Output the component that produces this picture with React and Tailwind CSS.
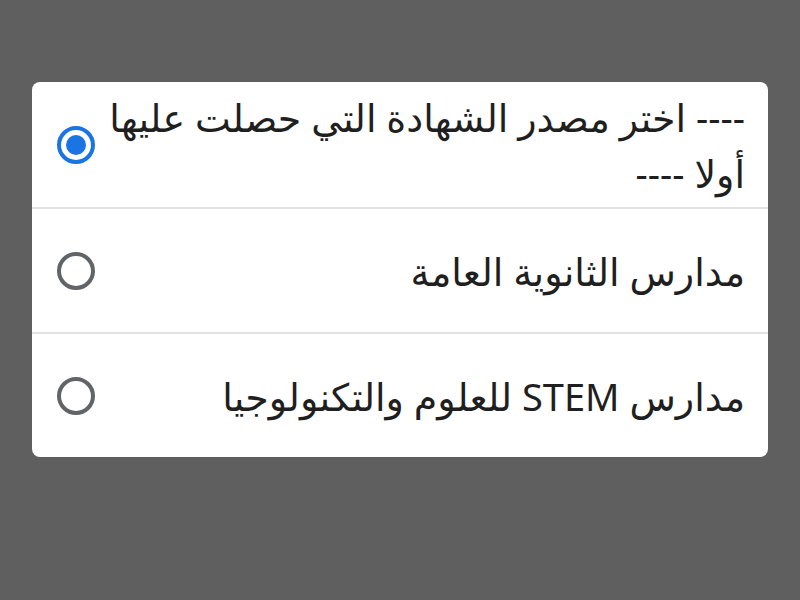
export default function App() {
  const options = [
    { label: "---- اختر مصدر الشهادة التي حصلت عليها أولا ----", checked: true },
    { label: "مدارس الثانوية العامة", checked: false },
    { label: "مدارس STEM للعلوم والتكنولوجيا", checked: false },
  ];
  return (
    <div className="w-[800px] h-[600px] bg-[#5f5f5f] pt-[82px] px-8" style={{ fontFamily: '"Noto Sans", "DejaVu Sans", sans-serif' }}>
      <div dir="rtl" className="bg-white rounded-[8px] overflow-hidden">
        {options.map((o, i) => (
          <div key={i} className={`flex items-center h-[125px] pr-[23px] pl-[25px] ${i > 0 ? "border-t-2 border-[#e2e2e2]" : ""}`}>
            <div className="flex-1 text-right text-[38px] leading-[56px] text-[#1f1f1f]">{o.label}</div>
            <div className="w-[38px] h-[38px] mr-[2px] shrink-0 flex items-center justify-center">
              {o.checked ? (
                <div className="w-[38px] h-[38px] rounded-full border-[4px] border-[#1b74e4] flex items-center justify-center">
                  <div className="w-[20px] h-[20px] rounded-full bg-[#1b74e4]" />
                </div>
              ) : (
                <div className="w-[38px] h-[38px] rounded-full border-[4px] border-[#626568]" />
              )}
            </div>
          </div>
        ))}
      </div>
    </div>
  );
}
